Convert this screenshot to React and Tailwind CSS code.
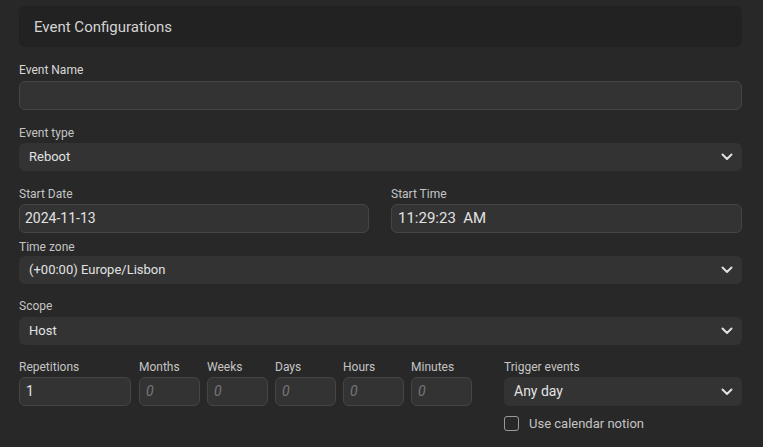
const font = { fontFamily: "Roboto, 'Liberation Sans', sans-serif" };

function Chevron() {
    return (
        <svg width="12" height="8" viewBox="0 0 12 8" className="shrink-0">
            <polyline
                points="1.5,1.5 6,6 10.5,1.5"
                fill="none"
                stroke="#e0e0e0"
                strokeWidth="2"
                strokeLinecap="round"
                strokeLinejoin="round"
            />
        </svg>
    );
}

function Label({ children, className = "" }) {
    return (
        <div className={`text-[12px] leading-[16px] text-[#c4c4c4] ${className}`}>
            {children}
        </div>
    );
}

function TextInput({ value, placeholder, className = "" }) {
    return (
        <div
            className={`h-[29px] bg-[#333333] border border-[#454545] rounded-[6px] px-[6px] flex items-center text-[14px] ${className}`}
        >
            {value ? (
                <span className="text-[#e2e2e2]">{value}</span>
            ) : (
                <span className="text-[#777777] italic">{placeholder}</span>
            )}
        </div>
    );
}

function Select({ value, className = "" }) {
    return (
        <div
            className={`h-[28px] bg-[#333333] rounded-[6px] pl-[10px] pr-[9px] flex items-center justify-between text-[13px] text-[#e2e2e2] ${className}`}
        >
            <span>{value}</span>
            <Chevron />
        </div>
    );
}

export default function App() {
    return (
        <div
            className="w-full h-[447px] bg-[#282828] pl-[19px] pr-[21px] pt-[6px] overflow-hidden"
            style={font}
        >
            <div className="h-[41px] bg-[#222222] rounded-[6px] px-[15px] pt-[2px] flex items-center text-[15px] text-[#d4d4d4]">
                Event Configurations
            </div>

            <Label className="mt-[15px] mb-[3px] text-[#d8d8d8]">Event Name</Label>
            <TextInput value="" placeholder="" />

            <Label className="mt-[15px] mb-[2px]">Event type</Label>
            <Select value="Reboot" />

            <div className="flex gap-[22px] mt-[15px]">
                <div className="flex-1">
                    <Label className="mb-[2px]">Start Date</Label>
                    <TextInput value="2024-11-13" className="text-[14.5px] pl-[5px]" />
                </div>
                <div className="w-[351px]">
                    <Label className="mb-[2px]">Start Time</Label>
                    <TextInput value="11:29:23  AM" className="text-[15px] whitespace-pre" />
                </div>
            </div>

            <Label className="mt-[6px] mb-[1px]">Time zone</Label>
            <Select value="(+00:00) Europe/Lisbon" />

            <Label className="mt-[14px] mb-[3px]">Scope</Label>
            <Select value="Host" />

            <div className="flex mt-[14px]">
                <div className="w-[112px] mr-[8px]">
                    <Label className="mb-[2px]">Repetitions</Label>
                    <TextInput value="1" />
                </div>
                {["Months", "Weeks", "Days", "Hours", "Minutes"].map((name) => (
                    <div key={name} className="w-[61px] mr-[7px]">
                        <Label className="mb-[2px]">{name}</Label>
                        <TextInput value="" placeholder="0" />
                    </div>
                ))}
                <div className="flex-1 ml-[25px]">
                    <Label className="mb-[2px]">Trigger events</Label>
                    <Select value="Any day" className="h-[29px] text-[14px]" />
                    <div className="flex items-center gap-[10px] mt-[8px]">
                        <div className="w-[15px] h-[15px] rounded-[3px] border border-[#9a9a9a]" />
                        <span className="text-[13px] text-[#c4c4c4]">Use calendar notion</span>
                    </div>
                </div>
            </div>
        </div>
    );
}
